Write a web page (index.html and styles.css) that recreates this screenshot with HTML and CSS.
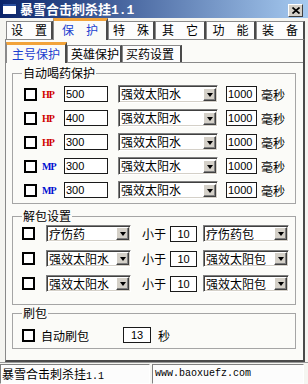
FILE: index.html
```html
<!DOCTYPE html>
<html lang="zh-CN">
<head>
    <meta charset="UTF-8">
    <title>暴雪合击刺杀挂1.1</title>
    <link rel="stylesheet" href="styles.css">
</head>
<body>

<div class="titlebar">
    <span class="app-icon"></span>
    <span class="title">暴雪合击刺杀挂<span class="ver">1.1</span></span>
    <span class="close">
        <svg width="8" height="7" viewBox="0 0 8 7"><path d="M0.5 0.5 L7.5 6.5 M7.5 0.5 L0.5 6.5" stroke="#000" stroke-width="1.7"/></svg>
    </span>
</div>

<div class="tabs">
    <div class="tab w47">设　置</div>
    <div class="tab w55 active">保　护</div>
    <div class="tab w47">特　殊</div>
    <div class="tab w51">其　它</div>
    <div class="tab w50">功　能</div>
    <div class="tab w49">装　备</div>
</div>

<div class="panel">
    <div class="subtabs">
        <div class="subtab w61 active">主号保护</div>
        <div class="subtab w55">英雄保护</div>
        <div class="subtab w60">买药设置</div>
    </div>

    <fieldset class="group g1">
        <legend>自动喝药保护</legend>
        <div class="row">
            <span class="chk"></span><span class="stat hp">HP</span><span class="field val">500</span>
            <span class="combo c100"><span class="combo-text">强效太阳水</span><span class="combo-btn"></span></span>
            <span class="field ms">1000</span><span class="unit">毫秒</span>
        </div>
        <div class="row">
            <span class="chk"></span><span class="stat hp">HP</span><span class="field val">400</span>
            <span class="combo c100"><span class="combo-text">强效太阳水</span><span class="combo-btn"></span></span>
            <span class="field ms">1000</span><span class="unit">毫秒</span>
        </div>
        <div class="row">
            <span class="chk"></span><span class="stat hp">HP</span><span class="field val">300</span>
            <span class="combo c100"><span class="combo-text">强效太阳水</span><span class="combo-btn"></span></span>
            <span class="field ms">1000</span><span class="unit">毫秒</span>
        </div>
        <div class="row">
            <span class="chk"></span><span class="stat mp">MP</span><span class="field val">300</span>
            <span class="combo c100"><span class="combo-text">强效太阳水</span><span class="combo-btn"></span></span>
            <span class="field ms">1000</span><span class="unit">毫秒</span>
        </div>
        <div class="row">
            <span class="chk"></span><span class="stat mp">MP</span><span class="field val">300</span>
            <span class="combo c100"><span class="combo-text">强效太阳水</span><span class="combo-btn"></span></span>
            <span class="field ms">1000</span><span class="unit">毫秒</span>
        </div>
    </fieldset>

    <fieldset class="group g2">
        <legend>解包设置</legend>
        <div class="row">
            <span class="chk"></span>
            <span class="combo c85"><span class="combo-text">疗伤药</span><span class="combo-btn"></span></span>
            <span class="less">小于</span><span class="field cnt">10</span>
            <span class="combo c86"><span class="combo-text">疗伤药包</span><span class="combo-btn"></span></span>
        </div>
        <div class="row">
            <span class="chk"></span>
            <span class="combo c85"><span class="combo-text">强效太阳水</span><span class="combo-btn"></span></span>
            <span class="less">小于</span><span class="field cnt">10</span>
            <span class="combo c86"><span class="combo-text">强效太阳包</span><span class="combo-btn"></span></span>
        </div>
        <div class="row">
            <span class="chk"></span>
            <span class="combo c85"><span class="combo-text">强效太阳水</span><span class="combo-btn"></span></span>
            <span class="less">小于</span><span class="field cnt">10</span>
            <span class="combo c86"><span class="combo-text">强效太阳包</span><span class="combo-btn"></span></span>
        </div>
    </fieldset>

    <fieldset class="group g3">
        <legend>刷包</legend>
        <div class="row">
            <span class="chk"></span><span class="auto">自动刷包</span>
            <span class="field sec">13</span><span class="unit-s">秒</span>
        </div>
    </fieldset>
</div>

<div class="statusbar">
    <div class="status s1">暴雪合击刺杀挂<span class="mono">1.1</span></div>
    <div class="status s2 mono">www.baoxuefz.com</div>
</div>

</body>
</html>
```

FILE: styles.css
```css
* { box-sizing: border-box; }
body { margin: 0; width: 308px; height: 384px; overflow: hidden; background: #f5f5f1; font: 12px "Noto Sans CJK SC", sans-serif; color: #000; }

.titlebar { height: 18px; display: flex; align-items: center; padding: 0 5px 0 3px; background: linear-gradient(to right, #0a246a, #a6caf0); color: #fff; }
.app-icon { width: 13px; height: 10px; background: #fff; border-top: 2px solid #2a4f9e; }
.title { margin-left: 4px; font-weight: bold; font-size: 13px; line-height: 17px; }
.title .ver { font-family: "Liberation Mono", monospace; }
.close { margin-left: auto; margin-top: 3px; width: 15px; height: 13px; background: #d4d0c8; border: 1px solid; border-color: #fff #404040 #404040 #fff; display: flex; align-items: center; justify-content: center; }

.tabs { display: flex; align-items: flex-end; height: 21px; padding-left: 6px; position: relative; z-index: 1; }
.tab { height: 18px; border: 1px solid #8a8a8a; border-bottom: none; border-right: 2px solid #4a4a4a; background: #fdfdfd; text-align: center; line-height: 16px; }
.tab.active { height: 22px; margin-bottom: -1px; border-top: 3px solid #f2a33a; color: #1a3fd0; background: #fbfbf8; line-height: 18px; }
.w47 { width: 47px; } .w55 { width: 55px; } .w51 { width: 51px; } .w50 { width: 50px; } .w49 { width: 49px; }
.w61 { width: 61px; } .w60 { width: 60px; }

.panel { width: 300px; height: 323px; margin-left: 5px; border: 1px solid #8a8a8a; border-right: 2px solid #4a4a4a; border-bottom: 2px solid #4a4a4a; background: #fbfbf8; }

.subtabs { display: flex; align-items: flex-end; height: 23px; border-bottom: 1px solid #8a8a8a; }
.subtab { height: 17px; border: 1px solid #8a8a8a; border-bottom: none; border-right: 2px solid #4a4a4a; background: #fdfdfd; padding-left: 3px; line-height: 16px; }
.subtab.active { height: 21px; margin-bottom: -1px; border-top: 3px solid #f2a33a; color: #1a3fd0; background: #fbfbf8; padding-left: 5px; line-height: 17px; }

.group { margin: 3px 7px 0 6px; padding: 0; border: 1px solid #a5a5a5; min-width: 0; }
.group legend { margin-left: 9px; padding: 0 1px; line-height: 14px; }
.g1 { padding: 5px 0 4px; }
.g2 { margin-top: 5px; padding: 2px 0 12px; }
.g3 { margin-top: 1px; padding: 7px 0 5px; }

.row { display: flex; align-items: center; height: 18px; }
.g1 .row + .row { margin-top: 6px; }
.g2 .row { height: 17px; }
.g2 .row + .row { margin-top: 8px; }
.g3 .row { height: 16px; }

.chk { width: 13px; height: 13px; border: 2px solid #000; background: #fff; flex: none; }
.g1 .chk { margin-left: 11px; }
.g2 .chk, .g3 .chk { margin-left: 9px; }

.stat { width: 22px; margin-left: 5px; font: bold 10px "Liberation Serif", serif; letter-spacing: -1px; }
.hp { color: #d00000; }
.mp { color: #0010d0; }

.field { height: 16px; border: 1px solid #1a1a1a; background: #fff; font: 11px "Liberation Sans", sans-serif; line-height: 14px; padding-left: 1px; flex: none; }
.val { width: 44px; }
.ms { width: 31px; margin-left: 8px; }
.cnt { width: 27px; margin-left: 4px; text-align: center; padding: 0; }
.sec { width: 28px; margin-left: 34px; text-align: center; padding: 0; }
.unit { margin-left: 4px; }
.unit-s { margin-left: 7px; }
.less { margin-left: 11px; }
.auto { margin-left: 6px; }

.combo { display: flex; align-items: center; height: 18px; background: #fff; border: 1px solid; border-color: #808080 #fff #fff #808080; box-shadow: inset 1px 1px #404040, inset -1px -1px #d4d0c8; padding-left: 2px; flex: none; }
.g2 .combo { height: 17px; }
.c100 { width: 100px; margin-left: 10px; }
.c85 { width: 85px; margin-left: 11px; }
.c86 { width: 86px; margin-left: 6px; }
.combo-text { line-height: 16px; white-space: nowrap; }
.combo-btn { margin-left: auto; margin-right: 1px; width: 13px; height: 13px; background: #d4d0c8; border: 1px solid; border-color: #fff #404040 #404040 #fff; box-shadow: inset -1px -1px #808080; display: flex; align-items: center; justify-content: center; flex: none; }
.combo-btn::after { content: ""; border-left: 3px solid transparent; border-right: 3px solid transparent; border-top: 4px solid #000; margin-top: 1px; }

.statusbar { display: flex; gap: 2px; height: 22px; border-top: 1px solid #9a9a9a; padding-top: 1px; }
.status { height: 20px; border: 1px solid; border-color: #808080 #fff #fff #808080; background: #fcfcfc; line-height: 18px; padding-left: 1px; white-space: nowrap; }
.s1 { width: 150px; }
.s2 { width: 152px; padding-left: 2px; }
.mono { font-family: "Liberation Mono", monospace; font-size: 10px; }
```
